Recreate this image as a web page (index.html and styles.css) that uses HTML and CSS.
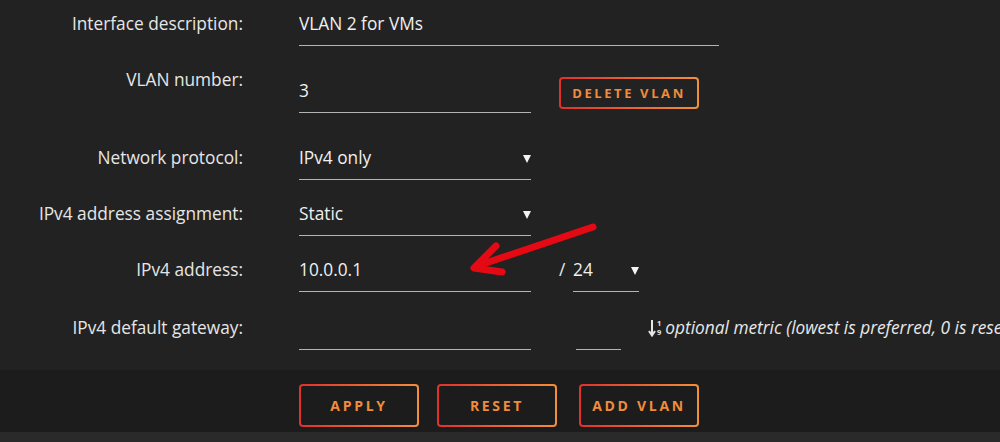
FILE: index.html
```html
<!DOCTYPE html>
<html lang="en">
<head>
    <meta charset="UTF-8">
    <meta name="viewport" content="width=device-width, initial-scale=1.0">
    <title>VLAN settings</title>
    <link rel="stylesheet" href="styles.css">
</head>
<body>
    <div class="page">
        <form class="vlan-form">
            <!-- Description -->
            <div class="row row-first">
                <label class="label" for="descr">Interface description:</label>
                <input class="field field-wide" type="text" id="descr" value="VLAN 2 for VMs">
            </div>

            <!-- VLAN number -->
            <div class="row row-vlan">
                <label class="label" for="vlan-id">VLAN number:</label>
                <input class="field field-mid field-low" type="text" id="vlan-id" value="3">
                <button type="button" class="btn btn-small">DELETE VLAN</button>
            </div>

            <!-- Protocol -->
            <div class="row">
                <label class="label" for="proto">Network protocol:</label>
                <span class="select field-mid">
                    <select class="field" id="proto">
                        <option>IPv4 only</option>
                    </select>
                </span>
            </div>

            <!-- Assignment -->
            <div class="row">
                <label class="label" for="assign">IPv4 address assignment:</label>
                <span class="select field-mid">
                    <select class="field" id="assign">
                        <option>Static</option>
                    </select>
                </span>
            </div>

            <!-- Address -->
            <div class="row">
                <label class="label" for="addr">IPv4 address:</label>
                <input class="field field-mid" type="text" id="addr" value="10.0.0.1">
                <span class="slash">/</span>
                <span class="select field-prefix">
                    <select class="field" id="prefix">
                        <option>24</option>
                    </select>
                </span>
            </div>

            <!-- Gateway -->
            <div class="row row-gateway">
                <label class="label" for="gw">IPv4 default gateway:</label>
                <input class="field field-mid" type="text" id="gw" value="">
                <input class="field field-metric" type="text" id="metric" value="">
                <span class="hint">
                    <span class="hint-icon">
                        <svg width="8" height="18" viewBox="0 0 8 18">
                            <path d="M4 1 V16 M1 12 L4 16.5 L7 12" fill="none" stroke="#e6e6e6" stroke-width="2"/>
                        </svg>
                        <span class="digits"><span>1</span><span>9</span></span>
                    </span>
                    optional metric (lowest is preferred, 0 is reserved for the default route)
                </span>
            </div>
        </form>

        <div class="actions">
            <button type="button" class="btn btn-big">APPLY</button>
            <button type="button" class="btn btn-big btn-reset">RESET</button>
            <button type="button" class="btn btn-big btn-add">ADD VLAN</button>
        </div>
        <div class="footer"></div>

        <!-- annotation arrow -->
        <svg class="marker" width="1000" height="442" viewBox="0 0 1000 442">
            <g fill="none" stroke="#e50914" stroke-width="7" stroke-linecap="round" stroke-linejoin="round">
                <path d="M593 227 L477 266"/>
                <path d="M496 246 L474 268 L502 272"/>
            </g>
        </svg>
    </div>
</body>
</html>
```

FILE: styles.css
```css
html, body {
    margin: 0;
    padding: 0;
    background: #222222;
    overflow: hidden;
}
body {
    font-family: "Open Sans", "Noto Sans", sans-serif;
    font-size: 17.3px;
    color: #e8e8e8;
}
.page {
    position: relative;
    width: 1000px;
    height: 442px;
    overflow: hidden;
}
.vlan-form {
    display: flex;
    flex-direction: column;
    padding-top: 13px;
}
.row {
    display: flex;
    align-items: flex-start;
    margin-bottom: 23px;
}
.row-vlan {
    margin-bottom: 34px;
}
.row-gateway {
    margin-top: 2px;
    margin-bottom: 20px;
}
.label {
    flex-shrink: 0;
    width: 243px;
    margin-right: 56px;
    text-align: right;
    line-height: 22px;
    white-space: nowrap;
    color: #e6e6e6;
}
.field {
    flex-shrink: 0;
    box-sizing: content-box;
    display: block;
    height: 22px;
    line-height: 22px;
    padding: 0 0 10px 0;
    margin: 0;
    border: none;
    border-bottom: 1px solid #b4b4b4;
    background: transparent;
    color: #f0f0f0;
    font-family: inherit;
    font-size: 17.3px;
    outline: none;
}
.field-wide {
    width: 420px;
}
.field-mid {
    width: 232px;
}
.field-low {
    margin-top: 11px;
}
.select {
    flex-shrink: 0;
    position: relative;
    display: block;
}
.select select {
    width: 100%;
    appearance: none;
    -webkit-appearance: none;
    border-radius: 0;
}
.select::after {
    content: "";
    position: absolute;
    right: 0;
    top: 8px;
    border-left: 4px solid transparent;
    border-right: 4px solid transparent;
    border-top: 8px solid #f4f4f4;
}
.slash {
    flex-shrink: 0;
    width: 14px;
    margin-left: 28px;
    line-height: 22px;
}
.field-prefix {
    width: 66px;
}
.field-metric {
    width: 45px;
    margin-left: 45px;
}
.hint {
    flex-shrink: 0;
    margin-left: 27px;
    white-space: nowrap;
    font-style: italic;
    line-height: 22px;
    display: flex;
    align-items: center;
    gap: 4px;
}
.hint-icon {
    display: inline-flex;
    align-items: center;
    font-style: normal;
}
.digits {
    display: inline-flex;
    flex-direction: column;
    font-size: 7.5px;
    line-height: 9px;
    font-weight: bold;
    margin-left: 1px;
}
.btn {
    box-sizing: border-box;
    border: 2px solid transparent;
    border-radius: 4px;
    background: linear-gradient(#222222, #222222) padding-box,
                linear-gradient(to right, #e0312b, #f3903a) border-box;
    color: #f08c3a;
    font-family: "Open Sans", "Noto Sans", sans-serif;
    font-weight: bold;
    cursor: pointer;
    padding: 0;
}
.btn-small {
    width: 140px;
    height: 32px;
    margin-top: 8px;
    margin-left: 28px;
    font-size: 13px;
    letter-spacing: 2.6px;
}
.actions {
    display: flex;
    height: 62px;
    box-sizing: border-box;
    padding: 14px 0 0 299px;
    background: #1c1c1c;
}
.btn-big {
    width: 120px;
    height: 43px;
    font-size: 14px;
    letter-spacing: 2.7px;
    background: linear-gradient(#1c1c1c, #1c1c1c) padding-box,
                linear-gradient(to right, #e0312b, #f3903a) border-box;
}
.btn-reset {
    margin-left: 18px;
}
.btn-add {
    margin-left: 22px;
}
.footer {
    height: 10px;
    background: #2a2a2a;
}
.marker {
    position: absolute;
    left: 0;
    top: 0;
    pointer-events: none;
}
```
